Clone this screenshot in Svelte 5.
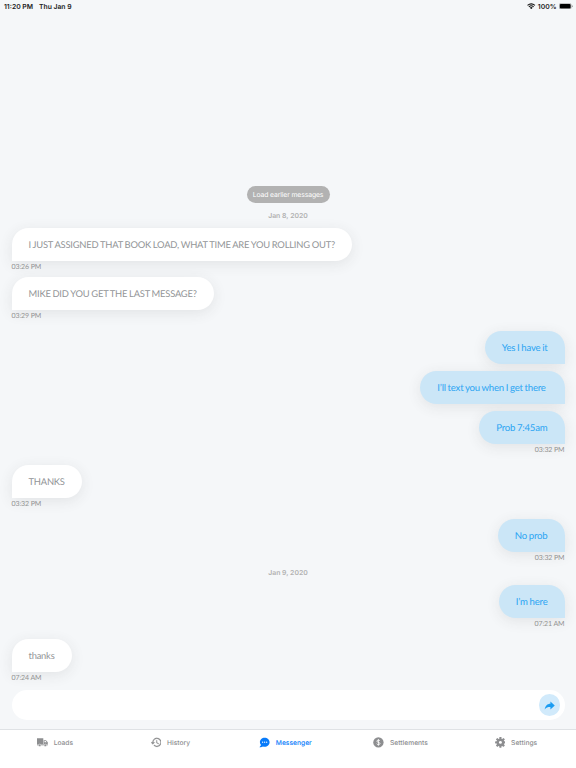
<script lang="ts">
  type Message = {
    text: string;
    mine?: boolean;
    time?: string;
    day?: string;
    turn?: boolean;
  };

  const messages: Message[] = [
    { text: 'I JUST ASSIGNED THAT BOOK LOAD, WHAT TIME ARE YOU ROLLING OUT?', time: '03:26 PM', day: 'Jan 8, 2020' },
    { text: 'MIKE DID YOU GET THE LAST MESSAGE?', time: '03:29 PM' },
    { text: 'Yes I have it', mine: true, turn: true },
    { text: 'I’ll text you when I get there ', mine: true },
    { text: 'Prob 7:45am', mine: true, time: '03:32 PM' },
    { text: 'THANKS', time: '03:32 PM', turn: true },
    { text: 'No prob', mine: true, time: '03:32 PM', turn: true },
    { text: 'I’m here', mine: true, time: '07:21 AM', day: 'Jan 9, 2020' },
    { text: 'thanks', time: '07:24 AM', turn: true }
  ];

  const tabs = ['Loads', 'History', 'Messenger', 'Settlements', 'Settings'];
  let active = $state('Messenger');
  let draft = $state('');
</script>

<div class="screen">
  <header class="status">
    <span>11:20 PM</span>
    <span class="date">Thu Jan 9</span>
    <span class="right">
      <svg class="wifi" viewBox="0 0 16 12">
        <path d="M1 4.5Q8 -1.5 15 4.5M3.5 7Q8 3 12.5 7" fill="none" stroke="#111" stroke-width="1.9" />
        <path d="M5.3 8.6Q8 6.4 10.7 8.6L8 11.5z" fill="#111" />
      </svg>
      <span>100%</span>
      <svg class="battery" viewBox="0 0 27 12">
        <rect x=".5" y=".5" width="23" height="11" rx="3" fill="none" stroke="#888" />
        <rect x="1.5" y="1.5" width="21" height="9" rx="2" fill="#000" />
        <path d="M25 4q1.5 .6 1.5 2t-1.5 2z" fill="#777" />
      </svg>
    </span>
  </header>

  <main class="thread">
    <button class="earlier">Load earlier messages</button>
    {#each messages as message}
      {#if message.day}
        <div class="day">{message.day}</div>
      {/if}
      <div class="message" class:mine={message.mine} class:turn={message.turn}>
        <div class="bubble">{message.text}</div>
        {#if message.time}
          <time>{message.time}</time>
        {/if}
      </div>
    {/each}
  </main>

  <div class="composer">
    <input bind:value={draft} aria-label="Message" />
    <button class="send" aria-label="Send">
      <svg viewBox="0 0 24 24">
        <path d="M14 3.5v4.7C7 8.5 3.2 12 1.5 20.5c3-4 7-5.3 12.5-5.2v5.2L23.5 12z" fill="#1b9cf2" />
      </svg>
    </button>
  </div>

  <nav class="tabs">
    {#each tabs as tab}
      <button class="tab" class:active={active === tab} onclick={() => (active = tab)}>
        <svg class="icon" viewBox="0 0 24 24">
          {#if tab === 'Loads'}
            <path d="M0 3h14v13H0zM15 7h5L24 11.5V16h-9z" />
            <path d="M16.7 8.7h2.6l2.2 2.8h-4.8z" fill="#fff" />
            <path d="M0 16.5h24v2H0z" />
            <circle cx="6" cy="18.5" r="2.7" stroke="#fff" />
            <circle cx="18.5" cy="18.5" r="2.7" stroke="#fff" />
          {:else if tab === 'History'}
            <path transform="translate(-1.5 -1.5) scale(1.12)" d="M13 3a9 9 0 0 0-9 9H1l4 4 4-4H6a7 7 0 1 1 2.06 4.94l-1.42 1.42A9 9 0 1 0 13 3zm-1 5v5l4.28 2.54.72-1.21-3.5-2.08V8z" stroke="currentColor" stroke-width=".4" />
          {:else if tab === 'Messenger'}
            <path d="M12.5 1.5C6.6 1.5 2 6 2 11.5c0 2.5 1 4.6 2.5 6.3L1 23c4 .1 6.3-.9 7.8-1.8 1.2.3 2.4.5 3.7.5C18.5 21.7 23.5 17 23.5 11.5S18.5 1.5 12.5 1.5z" />
            <circle cx="8" cy="11.5" r="1.45" fill="#fff" />
            <circle cx="12.5" cy="11.5" r="1.45" fill="#fff" />
            <circle cx="17" cy="11.5" r="1.45" fill="#fff" />
          {:else if tab === 'Settlements'}
            <circle cx="12" cy="12" r="11.5" />
            <path d="M15.5 8.8C14.8 7.5 13.6 7 12 7c-2 0-3.3.9-3.3 2.4 0 3.5 6.8 1.6 6.8 5.1 0 1.6-1.4 2.5-3.5 2.5-1.8 0-3.1-.7-3.7-2.1M12 4.7V19.3" fill="none" stroke="#fff" stroke-width="1.9" />
          {:else}
            {#each [0, 45, 90, 135] as angle}
              <rect x="9.5" y=".2" width="5" height="23.6" rx="1" transform="rotate({angle} 12 12)" />
            {/each}
            <circle cx="12" cy="12" r="8.3" />
            <circle cx="12" cy="12" r="3.2" fill="#fff" />
          {/if}
        </svg>
        <span>{tab}</span>
      </button>
    {/each}
  </nav>
</div>

<style>
  :global(body) {
    margin: 0;
    background: #f5f7f9;
  }

  .screen {
    width: 576px;
    height: 768px;
    display: flex;
    flex-direction: column;
    overflow: hidden;
    background: #f5f7f9;
    font-family: Inter, 'Liberation Sans', sans-serif;
    text-rendering: geometricPrecision;
  }

  button,
  input {
    border: none;
    padding: 0;
    font-family: inherit;
    text-rendering: inherit;
    cursor: pointer;
  }

  .status {
    height: 12px;
    margin-bottom: 1px;
    display: flex;
    align-items: center;
    padding: 0 3.5px 0 4px;
    font-size: 6.8px;
    font-weight: 600;
    color: #222;
    flex: none;
  }

  .date {
    margin-left: 6px;
  }

  .right {
    margin-left: auto;
    display: flex;
    align-items: center;
    gap: 2px;
  }

  .wifi {
    width: 8.5px;
    height: 6.5px;
  }

  .battery {
    width: 14px;
    height: 6.5px;
  }

  .thread {
    flex: 1;
    min-height: 0;
    display: flex;
    flex-direction: column;
    justify-content: flex-end;
    padding: 0 11.5px 1.8px;
  }

  .earlier {
    align-self: center;
    width: 83px;
    height: 17px;
    margin-bottom: 8.3px;
    border-radius: 9px;
    background: #b2b2b2;
    color: #fff;
    font-size: 6.8px;
    letter-spacing: -0.1px;
    white-space: nowrap;
    flex: none;
  }

  .day {
    height: 11px;
    margin: -1.3px 0 7px;
    line-height: 12px;
    text-align: center;
    font-size: 6.9px;
    font-weight: 600;
    color: #b2b2b2;
  }

  .message {
    display: flex;
    flex-direction: column;
    align-items: flex-start;
    margin-bottom: 6.7px;
    font-family: Lato, sans-serif;
  }

  .message.turn {
    margin-top: 4.7px;
  }

  .message.mine {
    align-items: flex-end;
  }

  .bubble {
    height: 33.3px;
    box-sizing: border-box;
    padding: 0 17px;
    border-radius: 17px 17px 17px 0;
    background: #fff;
    color: #929597;
    font-size: 9.4px;
    line-height: 35.4px;
    letter-spacing: -0.22px;
    word-spacing: -0.3px;
    white-space: pre;
    box-shadow: 0 3px 14px rgba(60, 60, 60, 0.1);
  }

  .mine .bubble {
    border-radius: 17px 17px 0 17px;
    background: #cbe6f7;
    color: #2ba5f3;
    font-size: 9.6px;
    letter-spacing: -0.2px;
    word-spacing: -0.5px;
  }

  time {
    height: 9.3px;
    line-height: 12px;
    font-size: 7px;
    letter-spacing: -0.1px;
    color: #929292;
  }

  .composer {
    height: 30.5px;
    flex: none;
    display: flex;
    align-items: center;
    margin: 0 11.5px 8.2px;
    padding-right: 4.5px;
    box-sizing: border-box;
    border-radius: 15.5px;
    background: #fff;
  }

  input {
    flex: 1;
    margin-left: 16px;
    background: none;
    outline: none;
    font-size: 9px;
  }

  .send {
    width: 21.5px;
    height: 21.5px;
    border-radius: 50%;
    background: #d1eafb;
    display: flex;
    align-items: center;
    justify-content: center;
  }

  .send svg {
    width: 11px;
    height: 11px;
  }

  .tabs {
    height: 39.5px;
    box-sizing: border-box;
    flex: none;
    display: flex;
    border-top: 1.5px solid #dfe2e5;
    background: #fff;
  }

  .tab {
    flex: 1;
    height: 26px;
    display: flex;
    align-items: center;
    justify-content: center;
    gap: 5.7px;
    padding-right: 5px;
    background: none;
    color: #8d8e90;
    font-size: 6.7px;
    font-weight: 500;
  }

  .tab.active {
    color: #087bfa;
  }

  .icon {
    width: 10.8px;
    height: 10.8px;
    fill: currentColor;
  }
</style>
